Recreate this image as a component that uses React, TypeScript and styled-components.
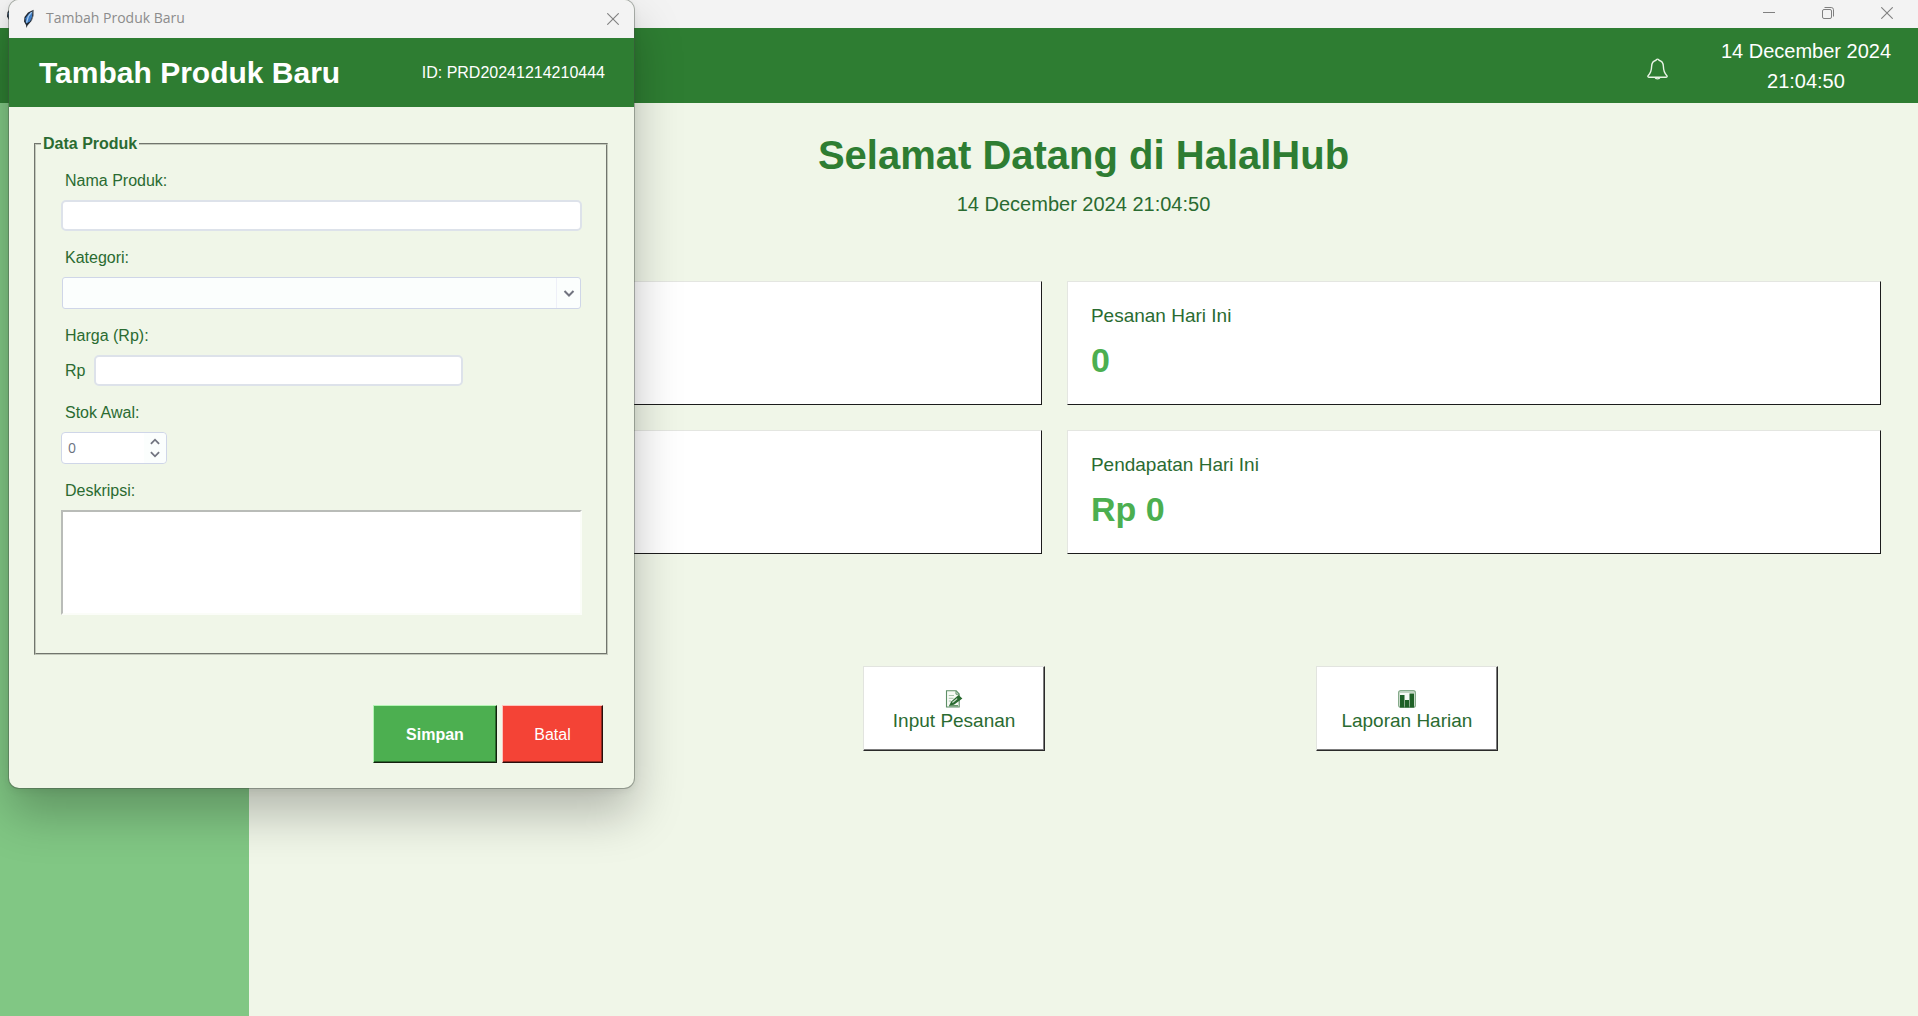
import React, { useState } from "react";
import styled, { createGlobalStyle } from "styled-components";

const GlobalStyle = createGlobalStyle`
  *, *::before, *::after { box-sizing: border-box; }
  body {
    margin: 0;
    background: #f0f6e8;
    font-family: "Liberation Sans", Arial, sans-serif;
    color: #2a6b31;
  }
  button, input, select, textarea { font-family: inherit; }
`;

const Desktop = styled.div`
  position: relative;
  display: flex;
  flex-direction: column;
  min-height: 100vh;
  overflow: hidden;
`;

const TitleBar = styled.div`
  display: flex;
  align-items: center;
  height: 28px;
  padding: 0 25px 0 5px;
  background: #f3f3f3;
`;

const WindowControls = styled.div`
  display: flex;
  gap: 47px;
  margin-left: auto;
  padding-bottom: 2px;
`;

const ChromeButton = styled.button`
  display: block;
  width: 12px;
  height: 12px;
  padding: 0;
  border: 0;
  background: none;
  color: #808080;

  svg { display: block; }
`;

const AppHeader = styled.header`
  display: flex;
  align-items: center;
  justify-content: flex-end;
  gap: 53px;
  height: 75px;
  padding: 0 27px;
  background: #2e7d32;
`;

const BellButton = styled.button`
  padding: 0;
  margin-top: 6px;
  border: 0;
  background: none;
  line-height: 0;
`;

const Clock = styled.div`
  font-size: 20px;
  line-height: 30px;
  text-align: center;
  color: #ffffff;
`;

const Workspace = styled.div`
  display: flex;
  flex: 1;
`;

const Sidebar = styled.nav`
  flex: 0 0 249px;
  background: #81c784;
`;

const Main = styled.main`
  flex: 1;
  min-width: 0;
  padding-top: 28px;
  background: #f0f6e8;
`;

const PageTitle = styled.h1`
  margin: 0 0 13px;
  font-size: 40px;
  line-height: 48px;
  text-align: center;
  color: #2e7d32;
`;

const PageDate = styled.p`
  margin: 0;
  font-size: 20px;
  line-height: 24px;
  text-align: center;
`;

const Stats = styled.section`
  display: grid;
  grid-template-columns: 13fr 14fr;
  gap: 25px;
  padding: 65px 37px 0;
`;

const StatCard = styled.article`
  display: flex;
  flex-direction: column;
  gap: 12px;
  min-height: 124px;
  padding: 22px 23px;
  border: 1px solid;
  border-color: #e4e6e1 #1c1c1c #1c1c1c #e4e6e1;
  background: #ffffff;
`;

const StatLabel = styled.span`
  font-size: 19px;
  line-height: 24px;
`;

const StatValue = styled.strong`
  font-size: 34px;
  line-height: 40px;
  color: #4caf50;
`;

const Actions = styled.section`
  display: grid;
  grid-template-columns: 7fr 7fr 7fr 4fr;
  justify-items: center;
  padding: 112px 26px 0;
`;

const ActionButton = styled.button<{ $column: number }>`
  grid-column: ${(p) => p.$column};
  grid-row: 1;
  display: flex;
  flex-direction: column;
  align-items: center;
  gap: 2px;
  width: 182px;
  height: 85px;
  padding: 23px 0 0;
  border: 1px solid;
  border-color: #e2e4df #2a2a2a #2a2a2a #e2e4df;
  background: #ffffff;
  box-shadow: inset -1px -1px #7d7d7d;
  color: #2a6b31;
  font-size: 19px;
  line-height: 22px;
`;

const DialogWindow = styled.section`
  position: absolute;
  top: 0;
  left: 9px;
  width: 625px;
  border-radius: 10px;
  background: #f0f6e8;
  box-shadow:
    0 0 0 1px rgba(70, 80, 70, 0.4),
    0 2px 8px rgba(0, 0, 0, 0.08),
    0 26px 48px rgba(0, 0, 0, 0.25);
`;

const DialogBar = styled.div`
  display: flex;
  align-items: center;
  gap: 10px;
  height: 38px;
  padding: 0 15px 0 13px;
  border-radius: 10px 10px 0 0;
  background: #f3f3f3;

  button { margin-left: auto; }
`;

const DialogCaption = styled.span`
  padding-bottom: 2px;
  color: #8c8c8c;
  font-family: "Open Sans", sans-serif;
  font-size: 14px;
  line-height: 20px;
`;

const DialogHeader = styled.header`
  display: flex;
  align-items: center;
  justify-content: space-between;
  height: 69px;
  padding: 1px 29px 0 30px;
  background: #2e7d32;
  color: #ffffff;
`;

const DialogTitle = styled.h2`
  margin: 0;
  font-size: 30px;
  line-height: 36px;
`;

const ProductId = styled.span`
  font-size: 16px;
  line-height: 20px;
`;

const ProductForm = styled.form`
  padding: 27px 26px 25px 25px;
`;

const DataGroup = styled.fieldset`
  min-width: 0;
  margin: 0;
  padding: 0;
  border: 2px groove #c3c9bb;
`;

const GroupTitle = styled.legend`
  margin-left: 5px;
  padding: 0 2px;
  font-size: 16px;
  font-weight: bold;
  line-height: 20px;
`;

const Fields = styled.div`
  display: flex;
  flex-direction: column;
  gap: 17px;
  padding: 17px 24px 38px 25px;
`;

const Field = styled.div`
  display: flex;
  flex-direction: column;
  align-items: flex-start;
  gap: 9px;
`;

const FieldLabel = styled.label`
  padding-left: 4px;
  font-size: 16px;
  line-height: 20px;
`;

const TextInput = styled.input`
  width: 100%;
  height: 31px;
  padding: 0 8px;
  border: 2px solid #dde2ea;
  border-radius: 5px;
  background: #ffffff;
  font-size: 16px;
  outline: none;
`;

const PriceRow = styled.div`
  display: flex;
  align-items: center;
  gap: 9px;
  width: 402px;
`;

const Currency = styled.span`
  padding-left: 4px;
  font-size: 16px;
  line-height: 20px;
`;

const SelectBox = styled.div`
  position: relative;
  width: 100%;
  padding: 0 1px;
`;

const Select = styled.select`
  display: block;
  width: 100%;
  height: 32px;
  padding: 0 32px 0 8px;
  border: 1px solid #cfd6e8;
  border-radius: 3px;
  appearance: none;
  background: #fbfefd;
  font-size: 16px;
  outline: none;
`;

const SelectArrow = styled.span`
  position: absolute;
  top: 1px;
  right: 2px;
  bottom: 1px;
  display: grid;
  place-items: center;
  width: 24px;
  border-left: 1px solid #eef0f8;
  pointer-events: none;
`;

const SpinBox = styled.div`
  display: flex;
  width: 106px;
  height: 32px;
  border: 1px solid #cfd6e8;
  border-radius: 4px;
  background: #ffffff;
`;

const SpinInput = styled.input`
  flex: 1;
  min-width: 0;
  padding: 0 6px 2px;
  border: 0;
  background: none;
  color: #6b7280;
  font-family: "Open Sans", sans-serif;
  font-size: 14px;
  outline: none;
  appearance: textfield;

  &::-webkit-inner-spin-button { appearance: none; margin: 0; }
`;

const SpinButtons = styled.div`
  display: flex;
  flex-direction: column;
  align-items: center;
  justify-content: center;
  gap: 6px;
  width: 22px;
  border-radius: 0 4px 4px 0;
  background: #fbfefd;

  button {
    display: block;
    height: 7px;
    padding: 0;
    border: 0;
    background: none;
    line-height: 0;
  }
`;

const Description = styled.textarea`
  display: block;
  width: 100%;
  height: 105px;
  padding: 4px;
  border: 2px solid;
  border-color: #b9bcb8 #fbfdf8 #fbfdf8 #b9bcb8;
  background: #ffffff;
  font-size: 16px;
  outline: none;
  resize: none;
`;

const DialogActions = styled.div`
  display: flex;
  justify-content: flex-end;
  gap: 5px;
  padding: 50px 5px 0 0;
`;

const FormButton = styled.button<{ $tone: "save" | "cancel" }>`
  width: ${(p) => (p.$tone === "save" ? 124 : 101)}px;
  height: 58px;
  padding: 2px 0 0;
  border: 1px solid;
  border-color: ${(p) =>
    p.$tone === "save" ? "#b5f5b5 #14200f #14200f #b5f5b5" : "#ffc4be #280f0d #280f0d #ffc4be"};
  background: ${(p) => (p.$tone === "save" ? "#4caf50" : "#f44336")};
  box-shadow: inset -1px -1px ${(p) => (p.$tone === "save" ? "#286b2b" : "#92281f")};
  color: #ffffff;
  font-size: 16px;
  font-weight: ${(p) => (p.$tone === "save" ? "bold" : "normal")};
  line-height: 20px;
`;

const Feather = () => (
  <svg width="14" height="20" viewBox="0 0 14 20" aria-hidden="true">
    <path d="M4.5 19 4 16 2 12.5 2.5 8 6 3.5 11.5 0.8 11.2 7 9.5 12 5.5 16.5Z" fill="#222831" />
    <path d="M4 14.4 3.4 9.2 6.8 4.8 10.4 2.6 10 8 8 12.4Z" fill="#3e7cc4" />
    <path d="M9.6 3.2 6.3 7.5 4.6 13.5" stroke="#a9cdf2" strokeWidth="1.2" fill="none" />
    <path d="M10.8 1 11.3 6.4 9.4 12" stroke="#777d85" strokeWidth="0.8" fill="none" />
  </svg>
);

const Close = () => (
  <svg width="12" height="12" viewBox="0 0 12 12" aria-hidden="true">
    <path d="M0.3.3 11.7 11.7M11.7.3.3 11.7" stroke="currentColor" strokeWidth="1.1" />
  </svg>
);

const Bell = () => (
  <svg width="21" height="22" viewBox="0 0 21 22" fill="none" stroke="#e9f3e6" strokeWidth="1.4" aria-hidden="true">
    <path d="M9 2.2C9.2.7 11.8.7 12 2.2 15.2 3 16.3 5.5 16.4 8.5 16.5 13 17.6 15.4 19.7 17.4 20.6 18.5 20 19.3 18.8 19.3H2.2C1 19.3.4 18.5 1.3 17.4 3.4 15.4 4.5 13 4.6 8.5 4.7 5.5 5.8 3 9 2.2Z" />
    <path d="M8 19.4C8.6 21.4 12.4 21.4 13 19.4" />
  </svg>
);

const Memo = () => (
  <svg width="18" height="18" viewBox="0 0 18 18" aria-hidden="true">
    <path d="M1.5.8H11.2L14.2 4V17H1.5Z" fill="#f7faf5" stroke="#5d8f66" strokeWidth="1.1" />
    <path d="M11 1V4.2H14" fill="none" stroke="#5d8f66" />
    <path d="M3.8 5.5H9M3.8 8.3H8.5M3.8 11H6" stroke="#a9c4ad" />
    <path d="M4.2 15.6 6.2 11.4 13.5 5 17.4 8.6 8.9 14.8Z" fill="#2a6b31" />
    <path d="M7.4 12.5 12.2 8.6" stroke="#cfe2d1" strokeWidth="1.2" />
    <path d="M4 15.8H13" stroke="#2a6b31" />
  </svg>
);

const BarChart = () => (
  <svg width="18" height="18" viewBox="0 0 18 18" aria-hidden="true">
    <rect x="0.7" y="0.7" width="16.6" height="16.6" rx="2" fill="#f7faf5" stroke="#86ab8b" strokeWidth="1.4" />
    <path d="M1.4 2.4H16.6" stroke="#bdd0bf" />
    <path d="M2 5H6.5V17.5H2ZM7 10H11V17.5H7ZM11.5 3.6H16V17.5H11.5Z" fill="#1f6127" />
  </svg>
);

const Chevron = ({ up = false, width = 12 }: { up?: boolean; width?: number }) => (
  <svg width={width} height="7" viewBox="0 0 11 7" fill="none" stroke="#71747f" strokeWidth="2" aria-hidden="true">
    <path d={up ? "M1 6 5.5 1.5 10 6" : "M1 1 5.5 5.5 10 1"} />
  </svg>
);

function ProductDialog() {
  const [stock, setStock] = useState(0);
  return (
    <DialogWindow role="dialog" aria-labelledby="dialog-title">
      <DialogBar>
        <Feather />
        <DialogCaption>Tambah Produk Baru</DialogCaption>
        <ChromeButton type="button"><Close /></ChromeButton>
      </DialogBar>
      <DialogHeader>
        <DialogTitle id="dialog-title">Tambah Produk Baru</DialogTitle>
        <ProductId>ID: PRD20241214210444</ProductId>
      </DialogHeader>
      <ProductForm onSubmit={(e) => e.preventDefault()}>
        <DataGroup>
          <GroupTitle>Data Produk</GroupTitle>
          <Fields>
            <Field>
              <FieldLabel htmlFor="nama">Nama Produk:</FieldLabel>
              <TextInput id="nama" type="text" />
            </Field>
            <Field>
              <FieldLabel htmlFor="kategori">Kategori:</FieldLabel>
              <SelectBox>
                <Select id="kategori" defaultValue="">
                  <option value="" />
                </Select>
                <SelectArrow><Chevron /></SelectArrow>
              </SelectBox>
            </Field>
            <Field>
              <FieldLabel htmlFor="harga">Harga (Rp):</FieldLabel>
              <PriceRow>
                <Currency>Rp</Currency>
                <TextInput id="harga" type="text" inputMode="numeric" />
              </PriceRow>
            </Field>
            <Field>
              <FieldLabel htmlFor="stok">Stok Awal:</FieldLabel>
              <SpinBox>
                <SpinInput
                  id="stok"
                  type="number"
                  min={0}
                  value={stock}
                  onChange={(e) => setStock(Number(e.target.value))}
                />
                <SpinButtons>
                  <button type="button" onClick={() => setStock(stock + 1)}><Chevron up width={10} /></button>
                  <button type="button" onClick={() => setStock(Math.max(0, stock - 1))}><Chevron width={10} /></button>
                </SpinButtons>
              </SpinBox>
            </Field>
            <Field>
              <FieldLabel htmlFor="deskripsi">Deskripsi:</FieldLabel>
              <Description id="deskripsi" />
            </Field>
          </Fields>
        </DataGroup>
        <DialogActions>
          <FormButton type="submit" $tone="save">Simpan</FormButton>
          <FormButton type="button" $tone="cancel">Batal</FormButton>
        </DialogActions>
      </ProductForm>
    </DialogWindow>
  );
}

export default function App() {
  return (
    <Desktop>
      <GlobalStyle />
      <TitleBar>
        <Feather />
        <WindowControls>
          <ChromeButton type="button">
            <svg width="12" height="12" viewBox="0 0 12 12" aria-hidden="true">
              <path d="M0 5.5H12" stroke="currentColor" />
            </svg>
          </ChromeButton>
          <ChromeButton type="button">
            <svg width="12" height="12" viewBox="0 0 12 12" fill="none" stroke="currentColor" aria-hidden="true">
              <rect x="0.5" y="2.5" width="9" height="9" rx="1.5" />
              <path d="M2.5.5H9.2Q11.5.5 11.5 2.8V9.5" />
            </svg>
          </ChromeButton>
          <ChromeButton type="button"><Close /></ChromeButton>
        </WindowControls>
      </TitleBar>
      <AppHeader>
        <BellButton type="button"><Bell /></BellButton>
        <Clock>14 December 2024<br />21:04:50</Clock>
      </AppHeader>
      <Workspace>
        <Sidebar />
        <Main>
          <PageTitle>Selamat Datang di HalalHub</PageTitle>
          <PageDate>14 December 2024 21:04:50</PageDate>
          <Stats>
            <StatCard />
            <StatCard>
              <StatLabel>Pesanan Hari Ini</StatLabel>
              <StatValue>0</StatValue>
            </StatCard>
            <StatCard />
            <StatCard>
              <StatLabel>Pendapatan Hari Ini</StatLabel>
              <StatValue>Rp 0</StatValue>
            </StatCard>
          </Stats>
          <Actions>
            <ActionButton type="button" $column={2}><Memo />Input Pesanan</ActionButton>
            <ActionButton type="button" $column={3}><BarChart />Laporan Harian</ActionButton>
          </Actions>
        </Main>
      </Workspace>
      <ProductDialog />
    </Desktop>
  );
}
